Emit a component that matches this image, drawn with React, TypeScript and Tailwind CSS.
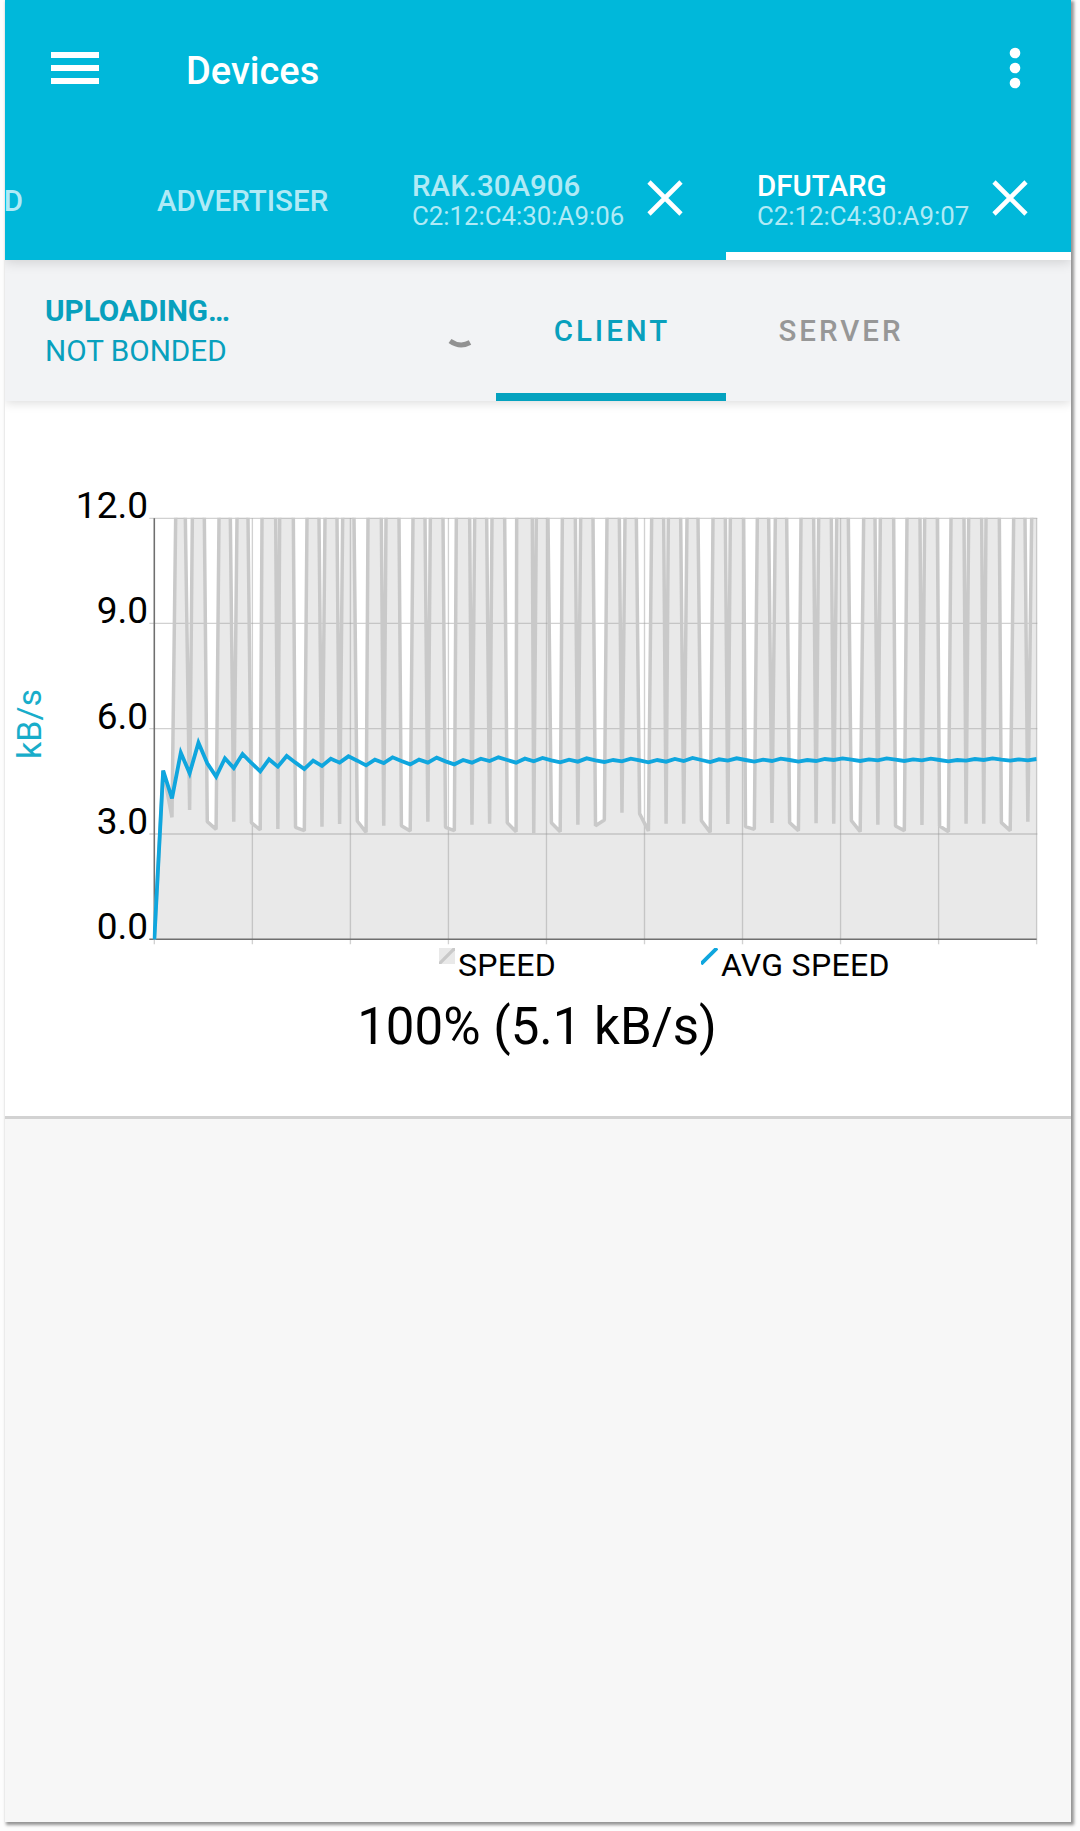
import React from "react";

// Chart coordinates are in thirds of a pixel: 0 kB/s sits at y = 1378, 12 kB/s at y = 115.
const STEP = 26.47;
const LEFT = 283;
const TOP = 115;
const BOTTOM = 1378;
const RIGHT = 2930;

// Low samples of the speed series: [sample index, y].
const lows: [number, number][] = [
  [0, 1378], [1, 872], [2, 1012], [4, 990], [6, 1025], [7, 1048], [9, 1025], [11, 1028], [12, 1050],
  [14, 1047], [16, 1042], [17, 1052], [19, 1040], [21, 1032], [23, 1023], [24, 1057], [26, 1037],
  [28, 1037], [29, 1053], [31, 1025], [33, 1042], [34, 1052], [36, 1034], [38, 1031], [40, 1028],
  [41, 1055], [43, 1060], [45, 1028], [46, 1055], [48, 1034], [50, 1037], [51, 1020], [53, 998],
  [55, 1001], [56, 1053], [58, 1031], [60, 1031], [62, 1022], [63, 1057], [65, 1032], [67, 1040],
  [68, 1048], [70, 1029], [72, 1028], [73, 1052], [75, 1030], [77, 1031], [79, 1022], [80, 1055],
  [82, 1034], [84, 1038], [85, 1052], [87, 1035], [89, 1038], [90, 1055], [92, 1031], [94, 1031],
  [96, 1028], [97, 1052], [99, 1025],
];

// Where each peak passes the top of the plot: [sample index, rising x, falling x].
const peaks: [number, number, number][] = [
  [3, 347, 376], [5, 397, 433], [8, 477, 511], [10, 531, 564], [13, 606, 647], [15, 659, 700],
  [18, 741, 777], [20, 795, 831], [22, 848, 882], [25, 924, 964], [27, 978, 1017], [30, 1059, 1095],
  [32, 1111, 1149], [35, 1189, 1229], [37, 1244, 1280], [39, 1296, 1334], [42, 1370, 1417],
  [44, 1429, 1464], [47, 1507, 1546], [49, 1562, 1599], [52, 1641, 1678], [54, 1695, 1729],
  [57, 1775, 1811], [59, 1825, 1862], [61, 1881, 1914], [64, 1959, 1996], [66, 2011, 2051],
  [69, 2092, 2126], [71, 2146, 2180], [74, 2223, 2261], [76, 2276, 2314], [78, 2330, 2365],
  [81, 2411, 2445], [83, 2461, 2501], [86, 2541, 2580], [88, 2594, 2632], [91, 2673, 2712],
  [93, 2726, 2765], [95, 2778, 2818], [98, 2861, 2895], [100, 2915, 2940],
];

const avg = [
  1378, 872, 955, 818, 880, 788, 850, 890, 835, 864, 822, 849, 874, 838, 860, 828, 848, 867, 842, 858,
  836, 848, 829, 842, 856, 839, 849, 832, 843, 853, 839, 848, 833, 844, 853, 840, 848, 836, 843, 832,
  840, 848, 836, 844, 834, 841, 847, 839, 845, 835, 841, 846, 840, 844, 836, 841, 847, 840, 845, 837,
  843, 834, 840, 846, 838, 842, 835, 840, 845, 839, 843, 836, 840, 845, 840, 843, 837, 840, 835, 839,
  843, 838, 841, 835, 839, 843, 838, 841, 836, 840, 844, 840, 842, 837, 840, 835, 839, 842, 838, 841, 837,
];

const speedPoints = [
  ...lows.map(([i, y]) => ({ i, pts: [`${LEFT + STEP * i},${y}`] })),
  ...peaks.map(([i, a, b]) => ({
    i,
    pts: [`${a},${TOP}`, `${a + 1},40`, `${b - 1},40`, `${b},${TOP}`],
  })),
]
  .sort((p, q) => p.i - q.i)
  .flatMap((p) => p.pts)
  .join(" ");

const avgPoints = avg.map((y, i) => `${LEFT + STEP * i},${y}`).join(" ");

function Chart() {
  return (
    <svg className="block h-[470px] w-[905px] shrink-0" viewBox="240 60 2715 1410">
      <defs>
        <clipPath id="plot">
          <rect x={LEFT - 5} y={TOP - 2} width={RIGHT - LEFT + 5} height={BOTTOM - TOP + 4} />
        </clipPath>
      </defs>
      <g clipPath="url(#plot)">
        <polygon points={`${speedPoints} ${RIGHT + 10},${BOTTOM} ${LEFT},${BOTTOM}`} fill="#e9e9e9" />
      </g>
      <g stroke="#999" strokeOpacity="0.45" strokeWidth="4">
        {[115, 430, 746, 1062].map((y) => (
          <line key={y} x1={LEFT - 15} x2={RIGHT + 2} y1={y} y2={y} />
        ))}
        {Array.from({ length: 10 }, (_, i) => (
          <line key={i} x1={LEFT + i * 294.1} x2={LEFT + i * 294.1} y1={TOP} y2={BOTTOM + 15} />
        ))}
      </g>
      <g stroke="#6f6f6f" strokeWidth="4.5">
        <line x1={LEFT} x2={LEFT} y1={TOP} y2={BOTTOM} />
        <line x1={LEFT - 15} x2={RIGHT} y1={BOTTOM} y2={BOTTOM} />
      </g>
      <g clipPath="url(#plot)" fill="none" strokeLinejoin="bevel">
        <polyline points={speedPoints} stroke="#c9c9c9" strokeWidth="10.5" />
        <polyline points={avgPoints} stroke="#0fa6de" strokeWidth="11.5" strokeLinejoin="miter" />
      </g>
    </svg>
  );
}

function Close() {
  return (
    <svg className="mb-[5px] h-[36px] w-[36px] shrink-0" viewBox="0 0 36 36" stroke="white" strokeWidth="4.6">
      <path d="M2 2L34 34M34 2L2 34" />
    </svg>
  );
}

function DeviceTab({ name, mac, active = false }: { name: string; mac: string; active?: boolean }) {
  return (
    <div className={active ? "w-[345px] border-b-8 border-white pl-[31px]" : "w-[345px] border-b-8 border-transparent pl-[31px]"}>
      <div className="flex h-[115px] items-center pt-[14px]">
        <div className="w-[235px] whitespace-nowrap leading-[30px]">
          <div className={active ? "text-[29.5px] font-medium text-white" : "text-[29.5px] font-medium text-[#b0eaf6]"}>{name}</div>
          <div className="text-[25.8px] text-[#b0eaf6]">{mac}</div>
        </div>
        <Close />
      </div>
    </div>
  );
}

export default function App() {
  return (
    <div className="h-[1831px] w-[1080px] overflow-hidden bg-[#fdfdfd] pl-[5px] font-['Roboto',sans-serif]">
      <div className="flex h-[1822px] w-[1066px] flex-col overflow-hidden bg-[#f7f7f7] shadow-[2px_2px_3px_1px_rgba(0,0,0,0.42)]">
        <header className="relative z-20 h-[260px] shrink-0 bg-[#00b8da] shadow-[0_2px_12px_rgba(0,0,0,0.15)]">
          <div className="flex h-[136px] items-center">
            <div className="ml-[46px] flex w-[48px] flex-col gap-[7px]">
              <div className="h-[6px] bg-white" />
              <div className="h-[6px] bg-white" />
              <div className="h-[6px] bg-white" />
            </div>
            <h1 className="ml-[87px] pt-[7px] text-[38px] font-medium text-white">Devices</h1>
            <svg className="mr-[50px] ml-auto h-[44px] w-[12px]" viewBox="0 0 12 44" fill="white">
              <circle cx="6" cy="7" r="5.3" />
              <circle cx="6" cy="22" r="5.3" />
              <circle cx="6" cy="37" r="5.3" />
            </svg>
          </div>
          <nav className="flex h-[124px]">
            <div className="flex h-[123px] w-[18px] items-center justify-end overflow-hidden pt-[7px] text-[29.5px] font-medium text-[#b0eaf6]">D</div>
            <div className="flex h-[123px] w-[358px] items-center pt-[7px] pl-[134px] text-[29.5px] font-medium text-[#b0eaf6]">ADVERTISER</div>
            <DeviceTab name="RAK.30A906" mac="C2:12:C4:30:A9:06" />
            <DeviceTab name="DFUTARG" mac="C2:12:C4:30:A9:07" active />
          </nav>
        </header>
        <div className="relative z-10 flex h-[141px] shrink-0 bg-[#f2f3f5] shadow-[0_2px_10px_rgba(0,0,0,0.14)]">
          <div className="w-[404px] pt-[31px] pl-[40px] text-[29.7px] leading-[40px] text-[#08a0bd]">
            <div className="font-bold">UPLOADING…</div>
            <div>NOT BONDED</div>
          </div>
          <div className="w-[87px] pt-[77px]">
            <svg className="ml-[38px] h-[14px] w-[26px]" viewBox="0 0 26 14" fill="none" stroke="#929292" strokeWidth="5">
              <path d="M3 4Q13 11 23 5.5" />
            </svg>
          </div>
          <div className="flex w-[230px] items-center justify-center border-b-8 border-[#05a2bf] pt-[9px] pl-[2px] text-[29.5px] font-medium tracking-[3px] text-[#08a0bd]">CLIENT</div>
          <div className="flex w-[230px] items-center justify-center border-b-8 border-transparent pt-[9px] text-[29.5px] font-medium tracking-[3px] text-[#979797]">SERVER</div>
        </div>
        <main className="h-[718px] shrink-0 border-b-3 border-[#d2d2d2] bg-white">
          <div className="flex h-[569px] pt-[99px]">
            <div className="flex w-[50px] items-start justify-center pt-[189px]">
              <span className="mr-[2px] rotate-180 text-[34px] leading-[48px] text-[#18adca] [writing-mode:vertical-rl]">kB/s</span>
            </div>
            <div className="w-[93px] text-right text-[37px] leading-[40px]">
              {["12.0", "9.0", "6.0", "3.0", "0.0"].map((v) => (
                <div key={v} className="mb-[65.3px] h-[40px] -translate-y-[14px]">{v}</div>
              ))}
            </div>
            <div className="-ml-[8px]">
              <Chart />
            </div>
          </div>
          <div className="-mt-[22px] flex h-[39px] text-[32px] leading-[34px] tracking-[0.3px]">
            <svg className="ml-[434px] h-[16px] w-[16px]" viewBox="0 0 16 16">
              <path fill="#e9e9e9" d="M0 0h16v16H0z" />
              <path stroke="#c9c9c9" strokeWidth="3.3" d="M0 16L16 0" />
            </svg>
            <span className="ml-[3px] w-[243px]">SPEED</span>
            <svg className="h-[17px] w-[17px]" viewBox="0 0 17 17">
              <path stroke="#0fa6de" strokeWidth="3.8" d="M0 16L16 0" />
            </svg>
            <span className="ml-[3px]">AVG SPEED</span>
          </div>
          <div className="pt-[10px] pr-[2px] text-center text-[51px] leading-[60px]">100% (5.1 kB/s)</div>
        </main>
      </div>
    </div>
  );
}
